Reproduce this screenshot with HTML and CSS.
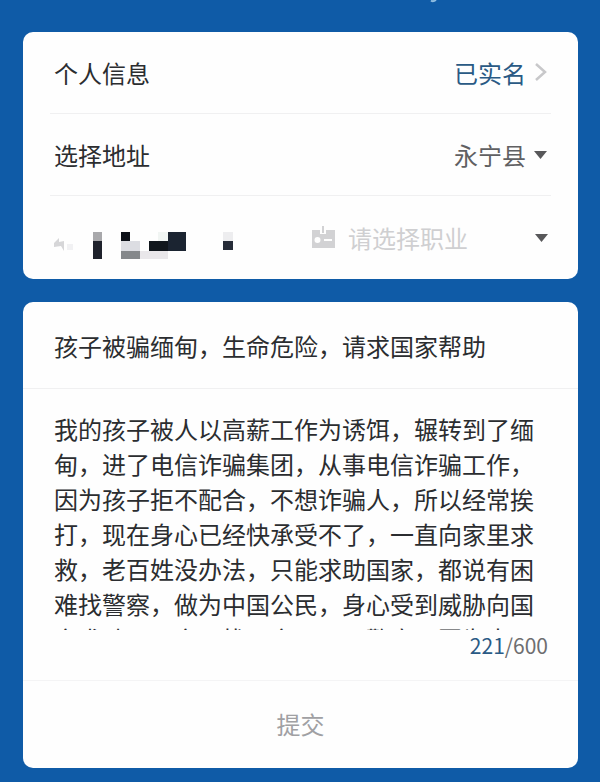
FILE: index.html
```html
<!DOCTYPE html>
<html lang="zh-CN">
<head>
    <meta charset="UTF-8">
    <meta name="viewport" content="width=device-width, initial-scale=1.0">
    <title>留言</title>
    <link rel="stylesheet" href="styles.css">
</head>
<body>
    <header class="top">
        <svg class="top-mark" width="10" height="3" viewBox="0 0 10 3" aria-hidden="true">
            <path d="M2 0.5Q4 2 7 0" fill="none" stroke="#8fbde0" stroke-width="2"/>
        </svg>
    </header>

    <form class="page">
        <section class="card info">
            <div class="row">
                <span>个人信息</span>
                <a class="verified" href="#">已实名
                    <svg width="14" height="20" viewBox="0 0 14 20" aria-hidden="true">
                        <path d="M2 1L11 9L2 17" fill="none" stroke="#c8c8ca" stroke-width="2.500"/>
                    </svg>
                </a>
            </div>

            <div class="row">
                <label for="address">选择地址</label>
                <div class="picker">
                    <select id="address">
                        <option>永宁县</option>
                    </select>
                    <svg width="14" height="10" viewBox="0 0 14 10" aria-hidden="true">
                        <path d="M0 1H13L6.500 9Z" fill="#58585a"/>
                    </svg>
                </div>
            </div>

            <div class="row person">
                <svg class="name" width="184" height="30" viewBox="0 0 184 30" aria-hidden="true">
                    <path d="M0 14L5 9V13L10 12V22L7 17L0 18Z" fill="#d6d6d8"/>
                    <path d="M13 15h6v6h-6z" fill="#f1f1f3"/>
                    <g shape-rendering="crispEdges">
                        <rect x="39" y="3" width="9" height="9" fill="#a8a8ab"/>
                        <rect x="39" y="12" width="9" height="18" fill="#1f222c"/>
                        <rect x="67" y="3" width="9" height="9" fill="#0d1118"/>
                        <rect x="67" y="12" width="19" height="10" fill="#dcdde2"/>
                        <rect x="67" y="22" width="19" height="8" fill="#85888b"/>
                        <rect x="86" y="22" width="28" height="8" fill="#e9e7ea"/>
                        <rect x="104" y="3" width="10" height="9" fill="#f1f5f3"/>
                        <rect x="95" y="12" width="19" height="10" fill="#11171d"/>
                        <rect x="114" y="3" width="18" height="19" fill="#1b2431"/>
                        <rect x="169" y="3" width="10" height="9" fill="#ededef"/>
                        <rect x="169" y="12" width="10" height="9" fill="#262c38"/>
                    </g>
                </svg>
                <div class="picker job">
                    <svg width="24" height="23" viewBox="0 0 24 23" aria-hidden="true">
                        <path fill="#d2d2d4" fill-rule="evenodd" d="M1 4H9V8H15V4H24V22H1ZM6.500 11A3 3 0 0 0 6.500 17A3 3 0 0 0 6.500 11ZM13 13V15H21V13Z"/>
                        <path fill="#d2d2d4" d="M11 0H13V7H11Z"/>
                    </svg>
                    <select id="job" aria-label="请选择职业">
                        <option>请选择职业</option>
                    </select>
                    <svg width="14" height="10" viewBox="0 0 14 10" aria-hidden="true">
                        <path d="M1 1H14L7.500 9Z" fill="#58585a"/>
                    </svg>
                </div>
            </div>
        </section>

        <section class="card message">
            <input class="title" type="text" aria-label="标题" value="孩子被骗缅甸，生命危险，请求国家帮助">
            <textarea class="content" aria-label="内容">我的孩子被人以高薪工作为诱饵，辗转到了缅甸，进了电信诈骗集团，从事电信诈骗工作，因为孩子拒不配合，不想诈骗人，所以经常挨打，现在身心已经快承受不了，一直向家里求救，老百姓没办法，只能求助国家，都说有困难找警察，做为中国公民，身心受到威胁向国家求助，国家，找国家，吧，警察，因为中国</textarea>
            <div class="count"><span>221</span>/600</div>
            <button class="submit" type="submit">提交</button>
        </section>
    </form>
</body>
</html>
```

FILE: styles.css
```css
* {
    box-sizing: border-box;
}

body {
    margin: 0;
    min-height: 100vh;
    background-color: #0f5ba7;
    color: #2b2d30;
    font-family: "Noto Sans CJK SC", sans-serif;
    font-size: 24px;
    font-weight: 400;
    line-height: 35px;
}

input,
select,
textarea,
button {
    margin: 0;
    padding: 0;
    border: none;
    outline: none;
    background: none;
    color: inherit;
    font: inherit;
}

.top {
    height: 32px;
    display: flex;
    justify-content: center;
    padding-left: 268px;
}

.page {
    display: flex;
    flex-direction: column;
    gap: 23px;
    padding: 0 22px 14px 23px;
}

.card {
    background-color: #fefefe;
    border-radius: 10px;
}

.info {
    padding: 0 27px;
}

.row {
    display: flex;
    align-items: center;
    justify-content: space-between;
    height: 82px;
    padding: 0 3px 0 4px;
    border-bottom: 1px solid #f0f0f1;
}

.row:last-child {
    height: 83px;
    border-bottom: none;
}

.verified {
    display: flex;
    align-items: center;
    gap: 8px;
    color: #2a5a85;
    text-decoration: none;
}

.picker {
    display: flex;
    align-items: center;
    gap: 8px;
}

.picker select {
    appearance: none;
    color: #606062;
}

.name {
    margin-top: 12px;
}

.job {
    width: 50%;
    padding-left: 10px;
    gap: 13px;
}

.job select {
    flex: 1;
    color: #cfcfd1;
}

.message {
    display: flex;
    flex-direction: column;
}

.title {
    height: 87px;
    padding: 0 30px 0 31px;
    border-bottom: 1px solid #f0f0f1;
}

.content {
    display: block;
    height: 241px;
    padding: 22px 30px 0 31px;
    overflow: hidden;
    resize: none;
}

.count {
    padding: 0 30px 20px;
    color: #6e6e70;
    font-size: 21px;
    line-height: 30px;
    text-align: right;
}

.count span {
    color: #2a5a85;
}

.submit {
    height: 88px;
    padding-bottom: 3px;
    border-top: 1px solid #f4f4f5;
    color: #a0a0a3;
    cursor: pointer;
}
```
